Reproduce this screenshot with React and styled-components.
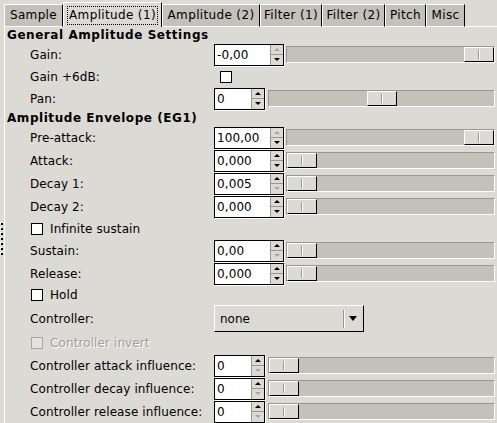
import React from 'react';
import styled, { createGlobalStyle } from 'styled-components';

const GlobalStyle = createGlobalStyle`
  html, body {
    margin: 0;
    padding: 0;
    background: #dcdad5;
  }
  body {
    font-family: "DejaVu Sans", "Liberation Sans", sans-serif;
    font-size: 12px;
    color: #000;
  }
`;

const Window = styled.div`
  width: 497px;
  height: 423px;
  display: flex;
  overflow: hidden;
  background: #dcdad5;
`;

const PaneHandle = styled.div`
  width: 4px;
  display: flex;
  flex-direction: column;
  align-items: flex-end;
  padding-top: 223px;
  gap: 3px;
  box-sizing: border-box;
`;

const Dot = styled.div`
  width: 2px;
  height: 2px;
  margin-right: 1px;
  background: #000;
  box-shadow: -1px -1px 0 #fff;
`;

const Notebook = styled.div`
  flex: 1;
  display: flex;
  flex-direction: column;
`;

const TabBar = styled.div`
  height: 27px;
  display: flex;
  align-items: flex-end;
`;

const Tab = styled.div`
  width: ${p => p.$w}px;
  height: ${p => (p.$active ? 25 : 23)}px;
  box-sizing: border-box;
  display: flex;
  align-items: center;
  justify-content: center;
  letter-spacing: 0.35px;
  background: ${p => (p.$active ? '#dcdad5' : '#c4c1bb')};
  border-top: 1px solid #fff;
  border-left: 1px solid #fff;
  border-right: 1px solid #000;
  border-bottom: ${p => (p.$active ? 'none' : '1px solid #fff')};
  padding-top: ${p => (p.$active ? 1 : 0)}px;
`;

const TabLabel = styled.span`
  padding: 1px 1px 2px;
  border: 1px dotted ${p => (p.$focus ? '#000' : 'transparent')};
`;

const TabFiller = styled.div`
  flex: 1;
  height: 1px;
  background: #fff;
`;

const Page = styled.div`
  flex: 1;
  border-left: 1px solid #fff;
  padding: 0 2px;
  display: flex;
  flex-direction: column;
`;

const Row = styled.div`
  height: ${p => p.$h}px;
  display: grid;
  grid-template-columns: 207px 1fr;
  align-items: center;
`;

const Heading = styled.div`
  grid-column: 1 / span 2;
  font-weight: bold;
  letter-spacing: 0.55px;
`;

const Label = styled.div`
  padding-left: 23px;
  white-space: nowrap;
  letter-spacing: 0.1px;
`;

const Control = styled.div`
  display: flex;
  align-items: center;
  gap: ${p => p.$gap || 2}px;
`;

const SpinBox = styled.div`
  width: ${p => p.$w}px;
  height: 22px;
  box-sizing: border-box;
  display: flex;
  border: 1px solid #000;
  box-shadow: 1px 1px 0 #fff;
  background: #fff;
`;

const SpinText = styled.div`
  flex: 1;
  padding-left: 2px;
  line-height: 20px;
  letter-spacing: 0.1px;
`;

const SpinButtons = styled.div`
  width: 12px;
  display: flex;
  flex-direction: column;
  background: #dcdad5;
  border-left: 1px solid #9a978f;
`;

const SpinHalf = styled.div`
  flex: 1;
  display: flex;
  align-items: center;
  justify-content: center;
  border-top: ${p => (p.$lower ? '1px solid #9a978f' : 'none')};
`;

const Arrow = styled.div`
  width: 0;
  height: 0;
  border-left: 3px solid transparent;
  border-right: 3px solid transparent;
  ${p => (p.$down ? 'border-top' : 'border-bottom')}: 3px solid ${p => (p.$off ? '#a8a59f' : '#000')};
`;

const Trough = styled.div`
  flex: 1;
  height: 17px;
  box-sizing: border-box;
  display: flex;
  background: #c4c1bb;
  border-top: 1px solid #9a978f;
  border-left: 1px solid #9a978f;
  border-bottom: 1px solid #fff;
  border-right: 1px solid #fff;
`;

const Thumb = styled.div`
  width: 30px;
  height: 100%;
  box-sizing: border-box;
  margin-left: calc((100% - 30px) * ${p => p.$pos});
  display: flex;
  align-items: center;
  justify-content: center;
  background: #dcdad5;
  border-top: 1px solid #fff;
  border-left: 1px solid #fff;
  border-right: 1px solid #000;
  border-bottom: 1px solid #000;
`;

const Grip = styled.div`
  width: 1px;
  height: 9px;
  background: #9a978f;
  border-right: 1px solid #fff;
`;

const CheckBox = styled.div`
  width: 12px;
  height: 12px;
  box-sizing: border-box;
  margin-left: ${p => p.$ml || 0}px;
  background: ${p => (p.$off ? '#e4e2de' : '#fff')};
  border: 1px solid ${p => (p.$off ? '#a8a59f' : '#000')};
  flex-shrink: 0;
`;

const CheckLine = styled.div`
  grid-column: 1 / span 2;
  display: flex;
  align-items: center;
  gap: 7px;
  padding-left: 24px;
  letter-spacing: 0.1px;
  color: ${p => (p.$off ? '#a19e98' : '#000')};
  text-shadow: ${p => (p.$off ? '1px 1px 0 #fff' : 'none')};
`;

const Combo = styled.div`
  width: 150px;
  height: 27px;
  box-sizing: border-box;
  display: flex;
  align-items: center;
  background: #dcdad5;
  border-top: 1px solid #fff;
  border-left: 1px solid #fff;
  border-right: 1px solid #000;
  border-bottom: 1px solid #000;
`;

const ComboText = styled.div`
  flex: 1;
  padding-left: 5px;
`;

const ComboSep = styled.div`
  width: 1px;
  height: 18px;
  background: #9a978f;
  border-right: 1px solid #fff;
  margin-right: 4px;
`;

const ComboArrow = styled.div`
  width: 0;
  height: 0;
  margin-right: 6px;
  border-left: 4px solid transparent;
  border-right: 4px solid transparent;
  border-top: 5px solid #000;
`;

const tabs = [
  { name: 'Sample', w: 59 },
  { name: 'Amplitude (1)', w: 99, active: true },
  { name: 'Amplitude (2)', w: 98 },
  { name: 'Filter (1)', w: 62 },
  { name: 'Filter (2)', w: 63 },
  { name: 'Pitch', w: 41 },
  { name: 'Misc', w: 39 },
];

const Spin = ({ value, w, upOff, downOff }) => (
  <SpinBox $w={w}>
    <SpinText>{value}</SpinText>
    <SpinButtons>
      <SpinHalf>
        <Arrow $off={upOff} />
      </SpinHalf>
      <SpinHalf $lower>
        <Arrow $down $off={downOff} />
      </SpinHalf>
    </SpinButtons>
  </SpinBox>
);

const Slider = ({ pos }) => (
  <Trough>
    <Thumb $pos={pos}>
      <Grip />
    </Thumb>
  </Trough>
);

const SpinRow = ({ label, value, pos = 0, narrow, upOff, downOff }) => (
  <Row $h={23}>
    <Label>{label}</Label>
    <Control $gap={narrow ? 3 : 2}>
      <Spin value={value} w={narrow ? 51 : 70} upOff={upOff} downOff={downOff} />
      <Slider pos={pos} />
    </Control>
  </Row>
);

const CheckRow = ({ label, h, off }) => (
  <Row $h={h}>
    <CheckLine $off={off}>
      <CheckBox $off={off} />
      {label}
    </CheckLine>
  </Row>
);

export default function App() {
  return (
    <Window>
      <GlobalStyle />
      <PaneHandle>
        {Array.from({ length: 7 }).map((_, i) => (
          <Dot key={i} />
        ))}
      </PaneHandle>
      <Notebook>
        <TabBar>
          {tabs.map(t => (
            <Tab key={t.name} $w={t.w} $active={t.active}>
              <TabLabel $focus={t.active}>{t.name}</TabLabel>
            </Tab>
          ))}
          <TabFiller />
        </TabBar>
        <Page>
          <Row $h={16}>
            <Heading>General Amplitude Settings</Heading>
          </Row>
          <SpinRow label="Gain:" value="-0,00" pos={1} upOff />
          <Row $h={21}>
            <Label>Gain +6dB:</Label>
            <Control>
              <CheckBox $ml={6} />
            </Control>
          </Row>
          <SpinRow label="Pan:" value="0" pos={0.5} narrow />
          <Row $h={16}>
            <Heading>Amplitude Envelope (EG1)</Heading>
          </Row>
          <SpinRow label="Pre-attack:" value="100,00" pos={1} upOff />
          <SpinRow label="Attack:" value="0,000" />
          <SpinRow label="Decay 1:" value="0,005" downOff />
          <SpinRow label="Decay 2:" value="0,000" />
          <CheckRow label="Infinite sustain" h={21} />
          <SpinRow label="Sustain:" value="0,00" downOff />
          <SpinRow label="Release:" value="0,000" />
          <CheckRow label="Hold" h={20} />
          <Row $h={27}>
            <Label>Controller:</Label>
            <Control>
              <Combo>
                <ComboText>none</ComboText>
                <ComboSep />
                <ComboArrow />
              </Combo>
            </Control>
          </Row>
          <CheckRow label="Controller invert" h={22} off />
          <SpinRow label="Controller attack influence:" value="0" narrow downOff />
          <SpinRow label="Controller decay influence:" value="0" narrow downOff />
          <SpinRow label="Controller release influence:" value="0" narrow downOff />
        </Page>
      </Notebook>
    </Window>
  );
}
